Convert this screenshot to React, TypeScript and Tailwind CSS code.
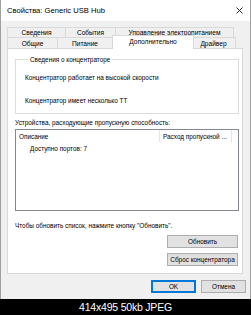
import React from 'react';

const Tab: React.FC<{ label: string; w: string; selected?: boolean }> = ({ label, w, selected }) => (
  <div
    className={`${w} flex items-center justify-center border-t border-x border-[#d9d9d9] -ml-px first:ml-0 ${
      selected ? 'bg-white h-[14px] -mx-[2px] mb-[-1px] relative z-10 pb-[2px]' : 'bg-[#f0f0f0] h-full'
    }`}
  >
    <span className="whitespace-nowrap">{label}</span>
  </div>
);

const Btn: React.FC<{ label: string; w: string; primary?: boolean }> = ({ label, w, primary }) => (
  <div
    className={`${w} h-[13px] flex items-center justify-center whitespace-nowrap bg-[#e1e1e1] ${
      primary ? 'border-2 border-[#0078d7]' : 'border border-[#adadad]'
    }`}
  >
    {label}
  </div>
);

const App: React.FC = () => {
  return (
    <div className="w-[251px] h-[315px] flex flex-col bg-black font-['Liberation_Sans',sans-serif] text-[6.4px] leading-[9px] text-black overflow-hidden">
      <div className="h-[299px] bg-[#f0f0f0] border-x border-[#a0a0a0] flex flex-col">
        {/* title bar */}
        <div className="h-[21px] bg-white flex items-center justify-between pl-[6px] pr-[6px] shrink-0">
          <span className="text-[7.6px]">Свойства: Generic USB Hub</span>
          <svg width="7" height="7" viewBox="0 0 7 7" className="mr-[1px]">
            <path d="M0.5 0.5L6.5 6.5M6.5 0.5L0.5 6.5" stroke="#111" strokeWidth="0.9" />
          </svg>
        </div>

        {/* tabs */}
        <div className="pt-[6px] px-[6px] flex flex-col">
          <div className="h-[10px] flex text-[6.6px]">
            <Tab label="Сведения" w="w-[59px]" />
            <Tab label="События" w="w-[51px]" />
            <Tab label="Управление электропитанием" w="w-[119px]" />
          </div>
          <div className="h-[11px] flex items-end text-[6.6px]">
            <Tab label="Общие" w="w-[51px]" />
            <Tab label="Питание" w="w-[56px]" />
            <Tab label="Дополнительно" w="w-[82px]" selected />
            <Tab label="Драйвер" w="w-[45px]" />
          </div>

          {/* panel */}
          <div className="w-[236px] h-[226px] bg-white border border-[#d9d9d9] pt-[6px] pl-[7px] pr-[3px] flex flex-col">
            <fieldset className="border border-[#dcdcdc] pl-[9px] pt-[9px] pb-[8px]">
              <legend className="ml-[3px] px-[2px]">Сведения о концентраторе</legend>
              <div>Концентратор работает на высокой скорости</div>
              <div className="mt-[14px]">Концентратор имеет несколько TT</div>
            </fieldset>

            <div className="mt-[4px]">Устройства, расходующие пропускную способность:</div>

            <div className="mt-[2px] h-[82px] border border-[#828790] flex flex-col">
              <div className="h-[12px] flex">
                <div className="w-[144px] flex items-center pl-[3px] border-r border-[#e5e5e5]">Описание</div>
                <div className="w-[72px] flex items-center pl-[3px] border-r border-[#e5e5e5] whitespace-nowrap overflow-hidden">
                  Расход пропускной ...
                </div>
              </div>
              <div className="pl-[14px] pt-[2px]">Доступно портов: 7</div>
            </div>

            <div className="mt-[10px]">Чтобы обновить список, нажмите кнопку "Обновить".</div>

            <div className="mt-[5px] flex flex-col items-end gap-[5px] pr-[1px]">
              <Btn label="Обновить" w="w-[71px]" />
              <Btn label="Сброс концентратора" w="w-[71px]" />
            </div>
          </div>
        </div>

        {/* footer */}
        <div className="pt-[6px] pr-[4px] flex justify-end gap-[5px]">
          <Btn label="OK" w="w-[45px]" primary />
          <Btn label="Отмена" w="w-[45px]" />
        </div>
      </div>

      <div className="flex-1 flex items-center justify-center text-white text-[10.5px] tracking-[-0.2px] leading-none">
        414x495 50kb JPEG
      </div>
    </div>
  );
};

export default App;
